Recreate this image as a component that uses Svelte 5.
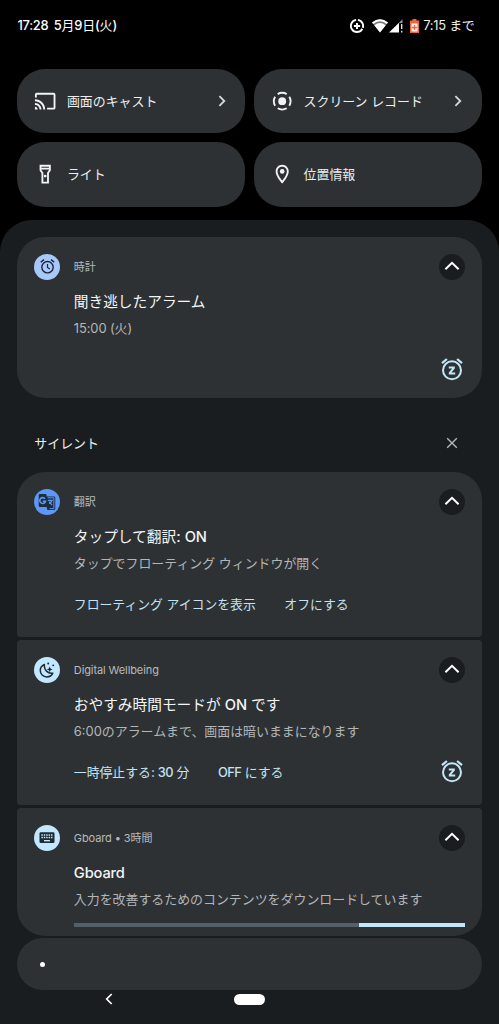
<script>
  const tiles = [
    { icon: 'cast', label: '画面のキャスト', more: true },
    { icon: 'record', label: 'スクリーン レコード', more: true },
    { icon: 'torch', label: 'ライト', more: false },
    { icon: 'pin', label: '位置情報', more: false }
  ];
  const silent = [
    { kind: 'translate', app: '翻訳', title: 'タップして翻訳: ON', text: 'タップでフローティング ウィンドウが開く', actions: ['フローティング アイコンを表示', 'オフにする'] },
    { kind: 'moon', app: 'Digital Wellbeing', title: 'おやすみ時間モードが ON です', text: '6:00のアラームまで、画面は暗いままになります', actions: ['一時停止する: 30 分', 'OFF にする'], snooze: true },
    { kind: 'keyboard', app: 'Gboard • 3時間', title: 'Gboard', text: '入力を改善するためのコンテンツをダウンロードしています', progress: true }
  ];
  // Latin runs are set heavier than the Japanese text around them.
  const runs = (s) => s.split(/([A-Za-z0-9:()]+)/).filter(Boolean).map((t) => ({ t, latin: /^[A-Za-z0-9:()]/.test(t) }));
</script>

{#snippet mixed(s)}{#each runs(s) as r}{#if r.latin}<span class="latin">{r.t}</span>{:else}{r.t}{/if}{/each}{/snippet}

{#snippet snoozeIcon()}
  <svg class="snooze" viewBox="0 0 24 24" fill="none" stroke="currentColor" stroke-width="2">
    <circle cx="12" cy="13.300" r="9" />
    <path d="M2 6.100 6.900 2M22 6.100 17.100 2" stroke-width="2.200" />
    <path d="M8.800 10.400h6M8.800 16.400h6.400M14.200 10.600l-4.600 5.600" stroke-width="2" />
  </svg>
{/snippet}

{#snippet card(n)}
  <article class="card {n.kind}">
    <header>
      <span class="badge">
        {#if n.kind === 'clock'}
          <svg width="17" height="17" viewBox="0 0 24 24" fill="none" stroke="#1c2733" stroke-width="2">
            <circle cx="12" cy="13" r="8" /><path d="M12 8.500V13.400l3.400 2.100" stroke-width="1.700" /><path d="M2.500 6 7 2.300M21.500 6 17 2.300" />
          </svg>
        {:else if n.kind === 'translate'}
          <svg width="18" height="18" viewBox="0 0 18 18">
            <path fill="#1d2c3f" d="M2 1h6l.9 2.500H16A1.300 1.300 0 0 1 17.300 4.800V15.700A1.300 1.300 0 0 1 16 17H9.500L8.500 14H2A1.300 1.300 0 0 1 .7 12.700V2.300A1.300 1.300 0 0 1 2 1Z" />
            <path fill="none" stroke="#5e97f6" stroke-width="1.600" d="M7 5.800A2.900 2.900 0 1 0 7.500 8.200H4.800" />
            <path fill="none" stroke="#5e97f6" stroke-width="1" d="M9.600 4.800h6.300v10.900h-4.200" />
            <path fill="none" stroke="#5e97f6" stroke-width="1.200" d="M9.800 7.300h5M13.900 7.500c-.5 1.500-1.300 2.500-2.700 3.300M11.300 8.700l2.800 3.500" />
          </svg>
        {:else if n.kind === 'moon'}
          <svg width="18" height="18" viewBox="0 0 24 24">
            <path fill="none" stroke="#1c2a33" stroke-width="2" stroke-linejoin="round" d="M8.500 4.600C5.200 6 3 8.900 3 12.500c0 4.900 3.900 8.700 8.700 8.700 3.600 0 6.700-2 8.100-5C14 17.600 7.600 12.500 8.500 4.600Z" />
            <path fill="#1c2a33" d="m15.600 7.400 1.100 2.700 2.700 1.100-2.700 1.100-1.100 2.700-1.100-2.700-2.700-1.100 2.700-1.100Z" />
            <circle cx="20.300" cy="5.800" r="1.300" fill="#1c2a33" /><circle cx="13.600" cy="3.400" r="1.300" fill="#1c2a33" />
          </svg>
        {:else}
          <svg width="18" height="18" viewBox="0 0 24 24">
            <rect x="2" y="4.200" width="20" height="14.500" rx="1.800" fill="#1c2a33" />
            <path stroke="#c2e7ff" stroke-width="2" stroke-dasharray="2 1.200" d="M4.500 8h15.500M4.500 11.300h15.500" /><path stroke="#c2e7ff" stroke-width="1.800" d="M8 15.600h8" />
          </svg>
        {/if}
      </span>
      <span class="app">{n.app}</span>
      <span class="toggle">
        <svg width="16" height="10" viewBox="0 0 16 10" fill="none" stroke="#fff" stroke-width="2"><path d="M1.400 8.200 8 1.800l6.600 6.400" /></svg>
      </span>
    </header>
    <div class="body">
      <h2>{@render mixed(n.title)}</h2>
      <p>{n.text}</p>
      {#if n.actions}
        <div class="actions">
          {#each n.actions as a}<button>{@render mixed(a)}</button>{/each}
          {#if n.snooze}{@render snoozeIcon()}{/if}
        </div>
      {/if}
      {#if n.progress}<div class="progress"><i></i></div>{/if}
    </div>
  </article>
{/snippet}

<main>
  <div class="status">
    <div class="clock-text"><span class="latin">17:28</span><span>{@render mixed('5月9日(火)')}</span></div>
    <div class="right">
      <svg width="16" height="16" viewBox="0 0 16 16" fill="none" stroke="#fff"><path stroke-width="1.900" d="M8.900 1.900a6.100 6.100 0 1 1-1.800 0M8 4.900v6.200M4.900 8h6.200" /><path stroke="#000" stroke-width="1.200" d="m13 10 2.500 1.500" /></svg>
      <svg class="wifi" width="16" height="14" viewBox="0 0 16 14"><path fill="#777" d="M0 3.500Q8-2.800 16 3.500L8 13.500Z" /><path fill="#fff" d="M0 3.500Q8-2.800 16 3.500L14.800 5Q8-.3 1.200 5ZM2.300 6.200Q8 2 13.700 6.200L8 13.500Z" /></svg>
      <svg class="cell" width="14" height="14" viewBox="0 0 14 14"><path fill="#fff" d="M0 13.500 10 3.700V13.500Z" /><path fill="#999" d="m9.500 4.200 4-4V4Z" /><path fill="#ddd" d="M12 5h1.400v5H12zM12 11.800h1.400v1.700H12z" /></svg>
      <svg class="battery" width="9" height="14" viewBox="0 0 9 14"><path fill="#e9683f" d="M2.500 0h4v1.500H9V14H0V1.500h2.500Z" /><path fill="#fff0e8" d="M1.500 4.500h6v8h-6z" /><path stroke="#e9683f" stroke-width="1.300" d="M4.500 6v5M2 8.500h5" /></svg>
      <span>7:15 まで</span>
    </div>
  </div>

  <div class="tiles">
    {#each tiles as t}
      <div class="tile">
        <span class="glyph">
          {#if t.icon === 'cast'}
            <svg width="22.400" height="22.400" viewBox="0 0 24 24" fill="#f1f3f5"><path d="M21 3H3c-1.100 0-2 .9-2 2v3h2V5h18v14h-7v2h7c1.100 0 2-.9 2-2V5c0-1.100-.9-2-2-2zM1 18v3h3c0-1.660-1.340-3-3-3zm0-4v2c2.760 0 5 2.240 5 5h2c0-3.870-3.130-7-7-7zm0-4v2c4.970 0 9 4.030 9 9h2c0-6.080-4.930-11-11-11z" /></svg>
          {:else if t.icon === 'record'}
            <svg width="22.400" height="22.400" viewBox="0 0 24 24"><circle cx="12" cy="12" r="4.200" fill="#f1f3f5" /><circle cx="12" cy="12" r="9" fill="none" stroke="#f1f3f5" stroke-width="2" pathLength="100" stroke-dasharray="18 7" stroke-dashoffset="9" /></svg>
          {:else if t.icon === 'torch'}
            <svg width="22.400" height="22.400" viewBox="0 0 24 24" fill="#f1f3f5"><path fill-rule="evenodd" d="M6 2v6l2 3v11h8V11l2-3V2H6zm10 2v1H8V4h8zm-2 6.400V20h-4v-9.600l-2-3V7h8v.4l-2 3z" /><circle cx="12" cy="14" r="1.500" /></svg>
          {:else}
            <svg width="22.400" height="22.400" viewBox="0 0 24 24" fill="#f1f3f5"><path d="M12 2C8.130 2 5 5.130 5 9c0 5.250 7 13 7 13s7-7.750 7-13c0-3.870-3.130-7-7-7zM7 9c0-2.760 2.240-5 5-5s5 2.240 5 5c0 2.880-2.880 7.190-5 9.880C9.920 16.210 7 11.850 7 9z" /><circle cx="12" cy="9" r="2.500" /></svg>
          {/if}
        </span>
        <span class="label">{t.label}</span>
        {#if t.more}<svg class="more" width="8" height="12" viewBox="0 0 8 12" fill="none" stroke="#d5d8da" stroke-width="1.800"><path d="m1.400 1.200 4.900 4.800-4.900 4.800" /></svg>{/if}
      </div>
    {/each}
  </div>

  <section class="shade">
    {@render card({ kind: 'clock', app: '時計', title: '聞き逃したアラーム', text: '15:00 (火)', actions: [], snooze: true })}
    <div class="section-head">
      <span>サイレント</span>
      <svg width="12" height="12" viewBox="0 0 12 12" stroke="#b4b8ba" stroke-width="1.400"><path d="m1.200 1.200 9.600 9.600M10.800 1.200l-9.600 9.600" /></svg>
    </div>
    <div class="group">
      {#each silent as n}{@render card(n)}{/each}
      <div class="shelf"><i></i></div>
    </div>
    <nav>
      <svg width="8" height="12" viewBox="0 0 8 12" fill="none" stroke="#fff" stroke-width="1.700"><path d="M6.700 1 1.700 6l5 5" /></svg>
      <span class="home"></span>
    </nav>
  </section>
</main>

<style>
  :global(body) { background: #000; }
  main {
    width: 499px; height: 1024px; overflow: hidden; background: #000; color: #eceef0;
    font-family: Inter, "Noto Sans CJK JP", sans-serif;
    font-size: 12.930px; display: flex; flex-direction: column;
  }
  svg { display: block; flex: none; }
  .latin { font-weight: 500; letter-spacing: -.15px; }
  .status { height: 69px; box-sizing: border-box; padding: 16px 24.500px 0 17.500px; display: flex; justify-content: space-between; flex: none; white-space: nowrap; line-height: 20px; }
  .clock-text { display: flex; gap: 5.500px; height: 20px; font-size: 12.900px; color: #fff; }
  .clock-text .latin { letter-spacing: -.3px; }
  .right { display: flex; height: 20px; align-items: center; font-size: 12.900px; letter-spacing: -.25px; }
  .wifi { margin-left: 7px; }
  .cell { margin-left: 1px; }
  .battery { margin: 0 4px 0 7px; }
  .tiles { display: grid; grid-template-columns: 1fr 1fr; gap: 9px; padding: 0 17.300px; flex: none; grid-auto-rows: 64.300px; }
  .tile { background: #2e3134; border-radius: 28px; display: flex; align-items: center; padding: 0 19.500px 0 16.700px; }
  .glyph { width: 22.400px; display: flex; justify-content: center; }
  .label { margin: -.5px 0 0 10.500px; flex: 1; line-height: 20px; }
  .shade { margin-top: 13.200px; background: #1a1d1f; border-radius: 32px 32px 0 0; padding: 17px 17.300px 0; flex: 1; display: flex; flex-direction: column; }
  .card { background: #2e3134; box-sizing: border-box; padding: 17px 17px 0; height: 165.500px; border-radius: 4px; }
  .card.clock { height: 161px; border-radius: 28px; }
  .card.translate { border-radius: 28px 28px 4px 4px; }
  .card.keyboard { height: 128.300px; border-radius: 4px 4px 28px 28px; }
  header { display: flex; align-items: center; height: 26px; }
  .badge, .toggle { width: 26px; height: 26px; border-radius: 50%; display: flex; align-items: center; justify-content: center; flex: none; }
  .badge { background: #c2e7ff; }
  .clock .badge { background: #a8c7fa; }
  .translate .badge { background: #5e97f6; }
  .toggle { background: #1a1d1f; }
  .toggle svg { margin-top: -2px; }
  .app { margin-left: 13.500px; flex: 1; font-size: 11px; letter-spacing: -.1px; color: #b6babc; line-height: 20px; }
  .body { padding-left: 39.500px; }
  h2 { margin: 8px 0 0; font-size: 14.700px; font-weight: 400; line-height: 28px; color: #f4f5f6; white-space: nowrap; }
  .clock h2 { margin-top: 8.300px; }
  p { margin: .2px 0 0; line-height: 24px; color: #b2b6b8; white-space: nowrap; }
  .clock p { margin-top: .4px; letter-spacing: -.1px; }
  .actions { display: flex; align-items: center; height: 30px; margin-top: 13.300px; }
  button { background: none; border: 0; padding: 0; margin: 0 28.500px 0 0; font: inherit; font-size: 12.850px; color: #c2e3f5; white-space: nowrap; }
  button .latin { letter-spacing: -.6px; }
  .snooze { width: 24px; height: 24px; margin: 0 1px 0 auto; color: #c2e7f8; }
  .progress { margin-top: 12.500px; height: 3.500px; background: #546067; display: flex; justify-content: flex-end; }
  .progress i { width: 105.500px; background: #c2e7f8; }
  .section-head { height: 74px; padding: 17px 24px 0 17px; display: flex; align-items: center; justify-content: space-between; box-sizing: border-box; flex: none; line-height: 20px; }
  .group { display: flex; flex-direction: column; gap: 2.400px; }
  .shelf { height: 52px; border-radius: 26px; background: #2e3134; display: flex; align-items: center; padding-left: 23px; }
  .shelf i { width: 5px; height: 5px; border-radius: 50%; background: #fff; }
  nav { display: flex; align-items: center; padding: 3px 0 0 88px; }
  .home { width: 31px; height: 11px; border-radius: 6px; background: #fff; margin-left: 121px; }
</style>
